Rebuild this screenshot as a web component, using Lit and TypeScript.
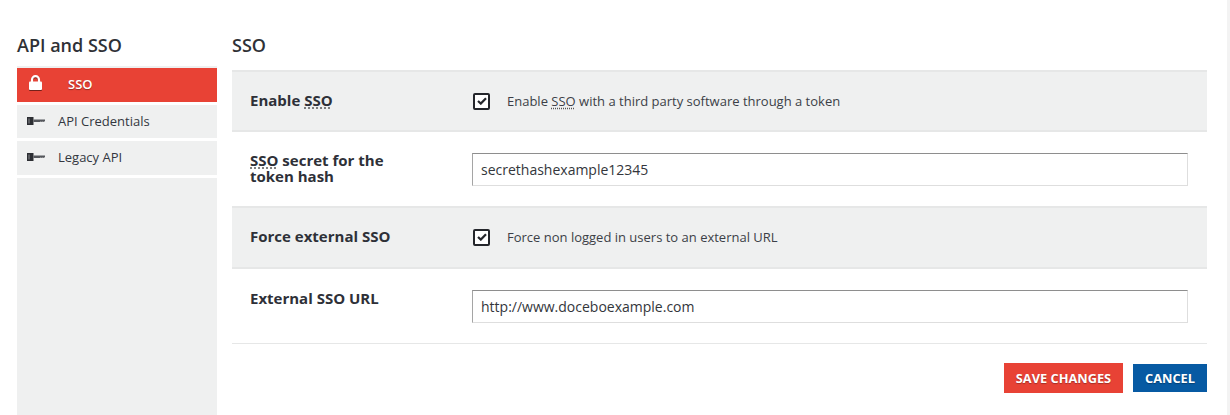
import { LitElement, html, css, svg } from "lit";
import { customElement } from "lit/decorators.js";

const key = svg`<svg class="key" width="18" height="8" viewBox="0 0 18 8"><path fill="#2c2e33" d="M0 0h6.5v8H0z"/><path fill="#8a8c90" d="M1.5 1.5h1v5h-1z"/><path fill="#55575c" d="M6.5 2.5H18v1.6l-1.2 1-1-.7-1 .7-1-.7-1 .7H6.5z"/></svg>`;
const lock = svg`<svg width="13" height="15" viewBox="0 0 13 15"><path fill="none" stroke="#fff" stroke-width="2.2" d="M3 8V4.7a3.5 3.5 0 0 1 7 0V8"/><rect y="6.5" width="13" height="8.5" rx="1" fill="#fff"/></svg>`;
const check = svg`<svg width="10" height="8" viewBox="0 0 10 8"><path fill="none" stroke="#24262b" stroke-width="2.2" d="M1 4l2.8 2.6L9 1.2"/></svg>`;

@customElement("app-root")
export class AppRoot extends LitElement {
  static styles = css`
    :host { display: block; width: 1230px; height: 415px; overflow: hidden; background: #fff;
      font-family: "Open Sans", "Noto Sans", sans-serif; color: #333740; }
    * { box-sizing: border-box; }
    .page { display: flex; height: 415px; padding-left: 17px; }
    .side { width: 200px; margin-right: 15px; display: flex; flex-direction: column; }
    h2 { margin: 0; font-size: 18px; line-height: 22px; font-weight: 600; color: #2f3136; padding-top: 34px; height: 66px; }
    .side nav { flex: 1; display: flex; flex-direction: column; border-top: 2px solid #eff0f0; }
    .item { height: 34px; margin-bottom: 3px; background: #eff0f0; display: flex; align-items: center; padding: 0 0 2px 10px; font-size: 13px; color: #333740; }
    .item.short { height: 33px; }
    .item .key { margin-right: 13px; flex: none; }
    .item.active { background: #e84235; color: #fff; font-weight: 600; padding-left: 12px; text-shadow: 0 1px 1px rgba(0,0,0,.35); }
    .item.active svg { margin: -4px 26px 0 0; filter: drop-shadow(0 1px 0 rgba(0,0,0,.5)); }
    .rest { flex: 1; background: #eff0f0; }
    main { width: 975px; display: flex; flex-direction: column; }
    main h2 { height: 70px; }
    .rows { border-top: 2px solid #e6e7e7; }
    .row { display: grid; grid-template-columns: 222px 716px; align-items: center; padding-left: 18px; border-bottom: 2px solid #e6e7e7; }
    .row.grey { background: #eff0f0; height: 60px; }
    .row.tall { height: 61px; padding-bottom: 1px; }
    .row.field { height: 76px; }
    .row.last { height: 75px; border-bottom-width: 1px; padding-top: 1px; }
    label { font-size: 15px; font-weight: 700; line-height: 16px; color: #2e3038; width: 150px; white-space: nowrap; margin-bottom: 2px; }
    .wrap { white-space: normal; }
    .row.last label { margin-bottom: 18px; }
    abbr { text-decoration: underline dotted #555; text-underline-offset: 2px; }
    .chk { display: flex; align-items: center; font-size: 13px; color: #3c3f47; padding-left: 1px; }
    .cb { width: 17px; height: 17px; border: 2px solid #24262b; border-radius: 2px; background: #fff; display: flex; align-items: center; justify-content: center; margin-right: 17px; }
    .box { height: 33px; border: 1px solid #dedede; border-top-color: #8e8e8e; border-left-color: #a5a5a5; background: #fff; font-size: 14px; line-height: 31px; padding-left: 8px; color: #33363b; }
    .actions { display: flex; justify-content: flex-end; align-items: center; gap: 10px; margin-top: 19px; }
    .btn { display: flex; align-items: center; justify-content: center; color: #fff; font-size: 12.8px; font-weight: 700; text-shadow: 0 1px 1px rgba(0,0,0,.3); }
    .save { width: 119px; height: 30px; background: #e84235; }
    .cancel { width: 74px; height: 28px; background: #075aa3; }
    .strip { width: 3px; margin-left: 20px; background: #f3f3f3; }
  `;

  render() {
    return html`<div class="page">
      <aside class="side">
        <h2>API and SSO</h2>
        <nav>
          <div class="item active">${lock}<span>SSO</span></div>
          <div class="item short">${key}<span>API Credentials</span></div>
          <div class="item">${key}<span>Legacy API</span></div>
          <div class="rest"></div>
        </nav>
      </aside>
      <main>
        <h2>SSO</h2>
        <div class="rows">
          <div class="row grey">
            <label>Enable <abbr>SSO</abbr></label>
            <div class="chk"><span class="cb">${check}</span><span>Enable <abbr>SSO</abbr> with a third party software through a token</span></div>
          </div>
          <div class="row field">
            <label class="wrap"><abbr>SSO</abbr> secret for the token hash</label>
            <div class="box">secrethashexample12345</div>
          </div>
          <div class="row grey tall">
            <label>Force external SSO</label>
            <div class="chk"><span class="cb">${check}</span><span>Force non logged in users to an external URL</span></div>
          </div>
          <div class="row field last">
            <label>External SSO URL</label>
            <div class="box">http://www.doceboexample.com</div>
          </div>
        </div>
        <div class="actions">
          <div class="btn save">SAVE CHANGES</div>
          <div class="btn cancel">CANCEL</div>
        </div>
      </main>
      <div class="strip"></div>
    </div>`;
  }
}
